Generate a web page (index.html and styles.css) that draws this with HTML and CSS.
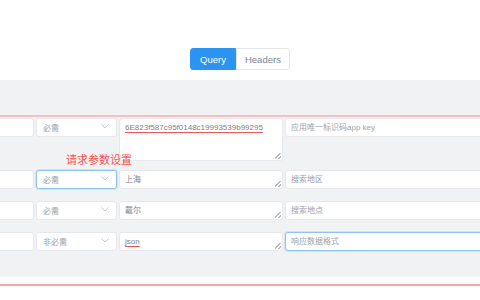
FILE: index.html
```html
<!DOCTYPE html>
<html lang="en">
<head>
    <meta charset="UTF-8">
    <meta name="viewport" content="width=device-width, initial-scale=1.0">
    <title>Params</title>
    <link rel="stylesheet" href="styles.css">
</head>
<body>
    <div class="tabs">
        <button class="tab active">Query</button>
        <button class="tab">Headers</button>
    </div>

    <div class="panel">
        <div class="params">
            <div class="row first">
                <input class="field" type="text">
                <div class="select"><span>必需</span><svg width="8" height="5" viewBox="0 0 8 5"><path d="M0.5 0.5 L4 4 L7.5 0.5" fill="none" stroke="#c5c8ce" stroke-width="1"/></svg></div>
                <textarea class="area tall typo" spellcheck="false">6E823f587c95f0148c19993539b99295</textarea>
                <input class="field" type="text" placeholder="应用唯一标识码app key">
            </div>
            <div class="row">
                <input class="field" type="text">
                <div class="select focus"><span>必需</span><svg width="8" height="5" viewBox="0 0 8 5"><path d="M0.5 0.5 L4 4 L7.5 0.5" fill="none" stroke="#c5c8ce" stroke-width="1"/></svg></div>
                <textarea class="area" spellcheck="false">上海</textarea>
                <input class="field" type="text" placeholder="搜索地区">
            </div>
            <div class="row">
                <input class="field" type="text">
                <div class="select"><span>必需</span><svg width="8" height="5" viewBox="0 0 8 5"><path d="M0.5 0.5 L4 4 L7.5 0.5" fill="none" stroke="#c5c8ce" stroke-width="1"/></svg></div>
                <textarea class="area" spellcheck="false">戴尔</textarea>
                <input class="field" type="text" placeholder="搜索地点">
            </div>
            <div class="row">
                <input class="field" type="text">
                <div class="select"><span>非必需</span><svg width="8" height="5" viewBox="0 0 8 5"><path d="M0.5 0.5 L4 4 L7.5 0.5" fill="none" stroke="#c5c8ce" stroke-width="1"/></svg></div>
                <textarea class="area typo" spellcheck="false">json</textarea>
                <input class="field focus" type="text" placeholder="响应数据格式">
            </div>
        </div>
        <div class="note">请求参数设置</div>
    </div>

    <div class="mark"></div>
</body>
</html>
```

FILE: styles.css
```css
body {
    margin: 0;
    position: relative;
    overflow: hidden;
    background-color: #fff;
    font-family: "Liberation Sans", "Noto Sans CJK SC", sans-serif;
    width: 480px;
    height: 300px;
}

.tabs {
    height: 80px;
    display: flex;
    justify-content: center;
    align-items: flex-end;
    padding-bottom: 10px;
    box-sizing: border-box;
}

.tab {
    height: 22px;
    padding: 0 8px;
    font-family: "Liberation Sans", sans-serif;
    font-size: 9.5px;
    color: #808695;
    background-color: #fff;
    border: 1px solid #e3e5e8;
    border-radius: 0 3px 3px 0;
    margin: 0;
}

.tab.active {
    padding: 0 9px;
    color: #fff;
    background-color: #2b94f0;
    border-color: #2b94f0;
    border-radius: 3px 0 0 3px;
}

.panel {
    position: relative;
    height: 197px;
    background-color: #f1f2f4;
    padding-top: 38px;
    box-sizing: border-box;
}

.params {
    display: flex;
    flex-direction: column;
    gap: 12px;
    margin-left: -46px;
}

.row {
    display: grid;
    grid-template-columns: 80px 81px 164px 240px;
    column-gap: 2px;
    align-items: start;
}

.row.first {
    margin-bottom: -3px;
}

.field,
.select,
.area {
    box-sizing: border-box;
    height: 19px;
    margin: 0;
    border: 1px solid #e6e8eb;
    border-radius: 3px;
    background-color: #fff;
    font-family: "Liberation Sans", "Noto Sans CJK SC", sans-serif;
    font-size: 8px;
    color: #7d828c;
    outline: none;
}

.field {
    padding: 0 5px;
}

.field::placeholder {
    color: #9ea2a9;
}

.select {
    display: flex;
    align-items: center;
    justify-content: space-between;
    padding: 0 7px 1px 6px;
    color: #9a9ea5;
}

.select svg {
    margin-top: -2px;
}

.area {
    display: block;
    padding: 3px 5px;
    line-height: 12px;
    resize: vertical;
    overflow: hidden;
}

.area::-webkit-resizer {
    background: linear-gradient(135deg, transparent 40%, #b9bcc2 40%, #b9bcc2 55%, transparent 55%, transparent 72%, #b9bcc2 72%, #b9bcc2 87%, transparent 87%) no-repeat right 1px bottom 1px / 6px 6px;
}

.area.tall {
    height: 43px;
}

.typo {
    text-decoration: underline solid #ef5656;
    text-decoration-thickness: 1px;
    text-underline-offset: 2px;
}

.focus {
    border-color: #8cc4f6;
    box-shadow: 0 0 0 1px rgba(45, 140, 240, 0.15);
}

.note {
    position: absolute;
    left: 66px;
    top: 71px;
    font-family: "Noto Sans CJK SC", sans-serif;
    font-size: 11px;
    line-height: 16px;
    color: #f4564f;
}

.mark {
    position: absolute;
    left: -5px;
    right: -5px;
    top: 115px;
    height: 171px;
    box-sizing: border-box;
    border-top: 2px solid #f8bfc3;
    border-bottom: 2px solid #f8a7a7;
    pointer-events: none;
}
```
